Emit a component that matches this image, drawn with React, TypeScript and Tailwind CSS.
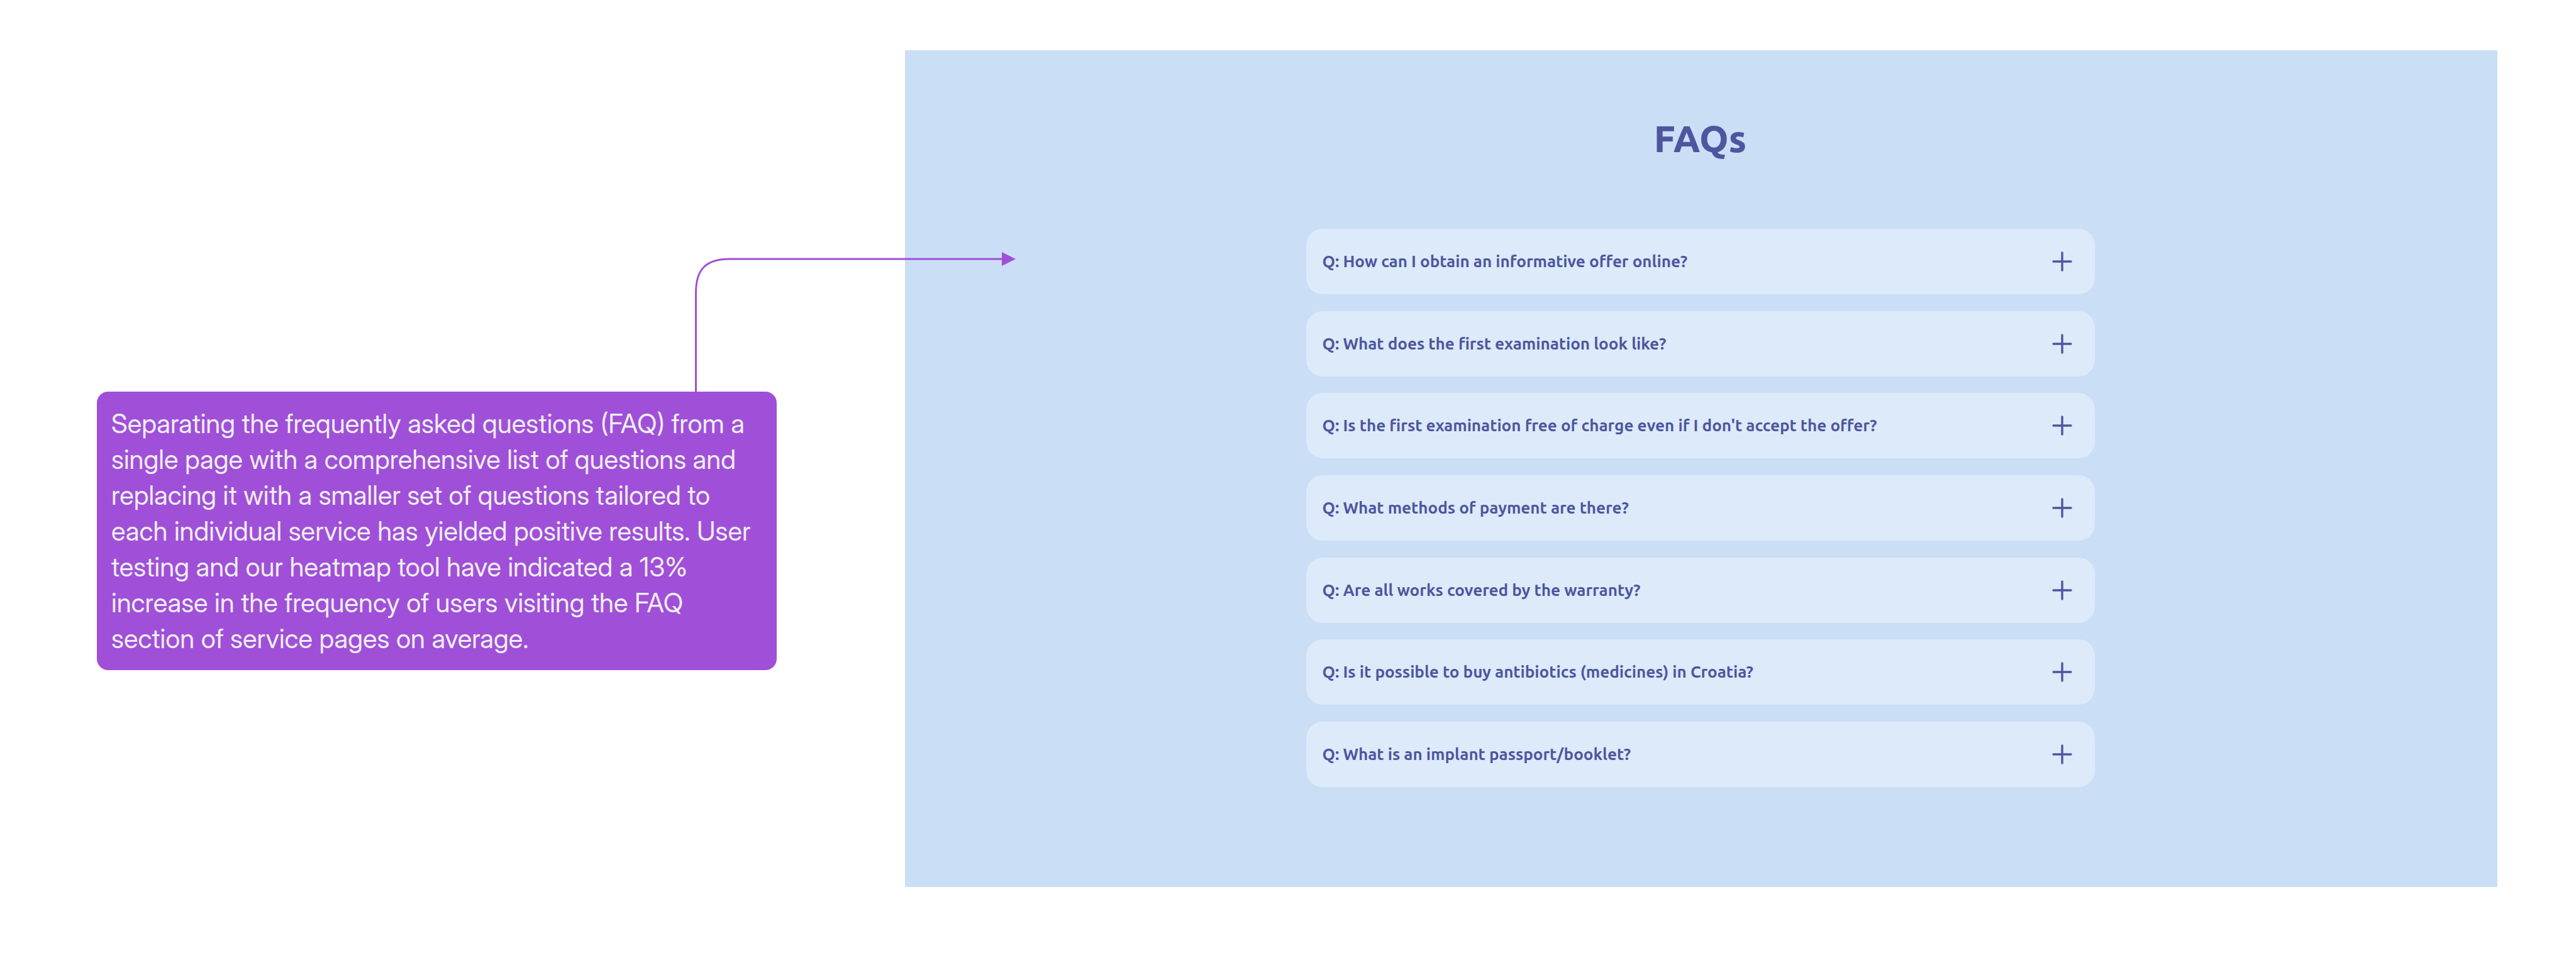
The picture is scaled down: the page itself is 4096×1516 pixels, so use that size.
const questions = [
  "Q: How can I obtain an informative offer online?",
  "Q: What does the first examination look like?",
  "Q: Is the first examination free of charge even if I don't accept the offer?",
  "Q: What methods of payment are there?",
  "Q: Are all works covered by the warranty?",
  "Q: Is it possible to buy antibiotics (medicines) in Croatia?",
  "Q: What is an implant passport/booklet?",
];

function PlusIcon() {
  return (
    <svg className="size-8 shrink-0" viewBox="0 0 32 32" fill="none" aria-hidden="true">
      <path d="M16 2v28M2 16h28" stroke="currentColor" strokeWidth="3.4" strokeLinecap="round" />
    </svg>
  );
}

function Connector() {
  return (
    <svg
      className="absolute bottom-full left-[88%] z-10 h-[224px] w-[512px] text-[#a04fd9]"
      viewBox="0 0 512 224"
      fill="none"
      aria-hidden="true"
    >
      <path d="M1.5 224V67C1.5 29 17.5 13 55.5 13H490" stroke="currentColor" strokeWidth="3" />
      <path d="M488 2l22 11-22 11z" fill="currentColor" />
    </svg>
  );
}

function Note() {
  return (
    <aside className="relative mt-[543px] self-start rounded-[18px] bg-[#a04fd9] px-[23px] py-[22px]">
      <Connector />
      <p className="font-['Inter_Display','Inter',sans-serif] text-[42px] leading-[57px] font-normal text-[#eeeef0]">
        Separating the frequently asked questions (FAQ) from a single page with a comprehensive list
        of questions and replacing it with a smaller set of questions tailored to each individual
        service has yielded positive results. User testing and our heatmap tool have indicated a 13%
        increase in the frequency of users visiting the FAQ section of service pages on average.
      </p>
    </aside>
  );
}

function Faq() {
  return (
    <section className="flex flex-col items-center bg-[#cadef6] pt-[102px] pr-[3px] pb-[159px] font-['Ubuntu','Noto_Sans',sans-serif] text-[#4d569e]">
      <h1 className="text-[59px] leading-[76px] font-extrabold">FAQs</h1>
      <ul className="mt-[106px] flex min-h-[888px] w-full max-w-[1254px] flex-col justify-between">
        {questions.map((question) => (
          <li key={question}>
            <button
              type="button"
              aria-expanded="false"
              className="flex h-[104px] w-full cursor-pointer items-center justify-between rounded-[26px] bg-[#dceafa] pr-9 pl-[26px] text-left text-[26px] leading-8 font-bold"
            >
              {question}
              <PlusIcon />
            </button>
          </li>
        ))}
      </ul>
    </section>
  );
}

export default function App() {
  return (
    <main className="grid min-h-screen grid-cols-[1081fr_2532fr] items-start gap-x-[204px] bg-white pt-20 pr-[125px] pb-[105px] pl-[154px]">
      <Note />
      <Faq />
    </main>
  );
}
